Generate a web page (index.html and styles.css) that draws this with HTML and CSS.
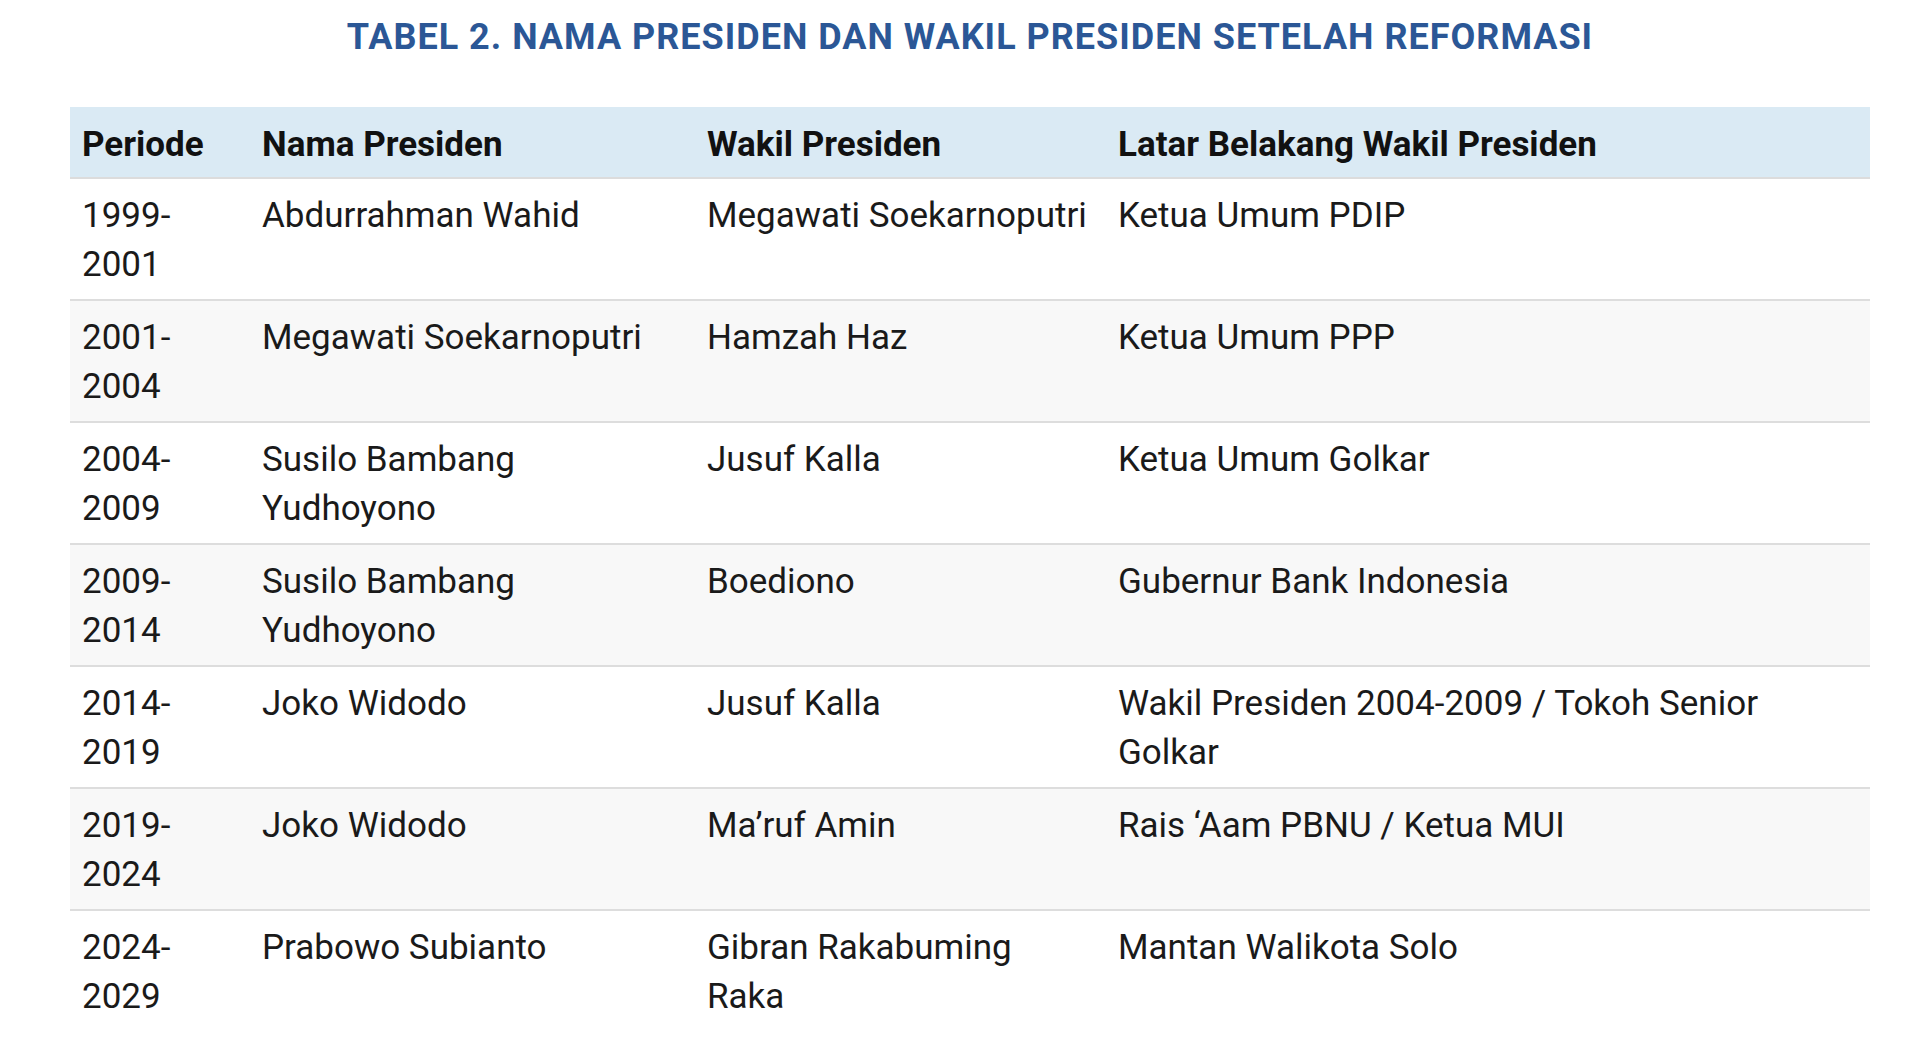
FILE: index.html
```html
<!DOCTYPE html>
<html lang="id">
<head>
<meta charset="utf-8">
<title>Tabel 2</title>
<link rel="stylesheet" href="styles.css">
</head>
<body>
<div class="page">
  <h2 class="caption">TABEL 2. NAMA PRESIDEN DAN WAKIL PRESIDEN SETELAH REFORMASI</h2>
  <table class="data">
    <colgroup>
      <col class="c-periode">
      <col class="c-presiden">
      <col class="c-wakil">
      <col class="c-latar">
    </colgroup>
    <thead>
      <tr>
        <th>Periode</th>
        <th>Nama Presiden</th>
        <th>Wakil Presiden</th>
        <th>Latar Belakang Wakil Presiden</th>
      </tr>
    </thead>
    <tbody>
      <tr>
        <td>1999-2001</td>
        <td>Abdurrahman Wahid</td>
        <td>Megawati Soekarnoputri</td>
        <td>Ketua Umum PDIP</td>
      </tr>
      <tr>
        <td>2001-2004</td>
        <td>Megawati Soekarnoputri</td>
        <td>Hamzah Haz</td>
        <td>Ketua Umum PPP</td>
      </tr>
      <tr>
        <td>2004-2009</td>
        <td>Susilo Bambang Yudhoyono</td>
        <td>Jusuf Kalla</td>
        <td>Ketua Umum Golkar</td>
      </tr>
      <tr>
        <td>2009-2014</td>
        <td>Susilo Bambang Yudhoyono</td>
        <td>Boediono</td>
        <td>Gubernur Bank Indonesia</td>
      </tr>
      <tr>
        <td>2014-2019</td>
        <td>Joko Widodo</td>
        <td>Jusuf Kalla</td>
        <td>Wakil Presiden 2004-2009 / Tokoh Senior Golkar</td>
      </tr>
      <tr>
        <td>2019-2024</td>
        <td>Joko Widodo</td>
        <td>Ma’ruf Amin</td>
        <td>Rais ‘Aam PBNU / Ketua MUI</td>
      </tr>
      <tr>
        <td>2024-2029</td>
        <td>Prabowo Subianto</td>
        <td>Gibran Rakabuming Raka</td>
        <td>Mantan Walikota Solo</td>
      </tr>
    </tbody>
  </table>
</div>
</body>
</html>
```

FILE: styles.css
```css
html, body {
  margin: 0;
  padding: 0;
  background: #ffffff;
}

body {
  font-family: Roboto, "Liberation Sans", sans-serif;
  color: #1a1a1a;
}

.page {
  width: 1800px;
  margin-left: 70px;
}

.caption {
  margin: 16px 0 49px 0;
  font-size: 36px;
  font-weight: 700;
  line-height: 42px;
  letter-spacing: 1px;
  text-align: center;
  color: #2b5796;
}

.data {
  width: 1800px;
  border-collapse: collapse;
  table-layout: fixed;
}

.c-periode { width: 180px; }
.c-presiden { width: 445px; }
.c-wakil { width: 411px; }
.c-latar { width: 764px; }

.data th {
  background: #daeaf4;
  color: #111111;
  font-size: 35px;
  font-weight: 700;
  line-height: 49px;
  text-align: left;
  padding: 13px 12px 8px 12px;
  border-bottom: 2px solid #dcdcdc;
}

.data td {
  font-size: 35px;
  font-weight: 400;
  line-height: 49px;
  text-align: left;
  vertical-align: top;
  padding: 12px 12px 10px 12px;
  border-bottom: 2px solid #dddddd;
}

.data tbody tr:nth-child(even) td {
  background: #f8f8f8;
}

.data tbody tr:last-child td {
  border-bottom: none;
}
```
